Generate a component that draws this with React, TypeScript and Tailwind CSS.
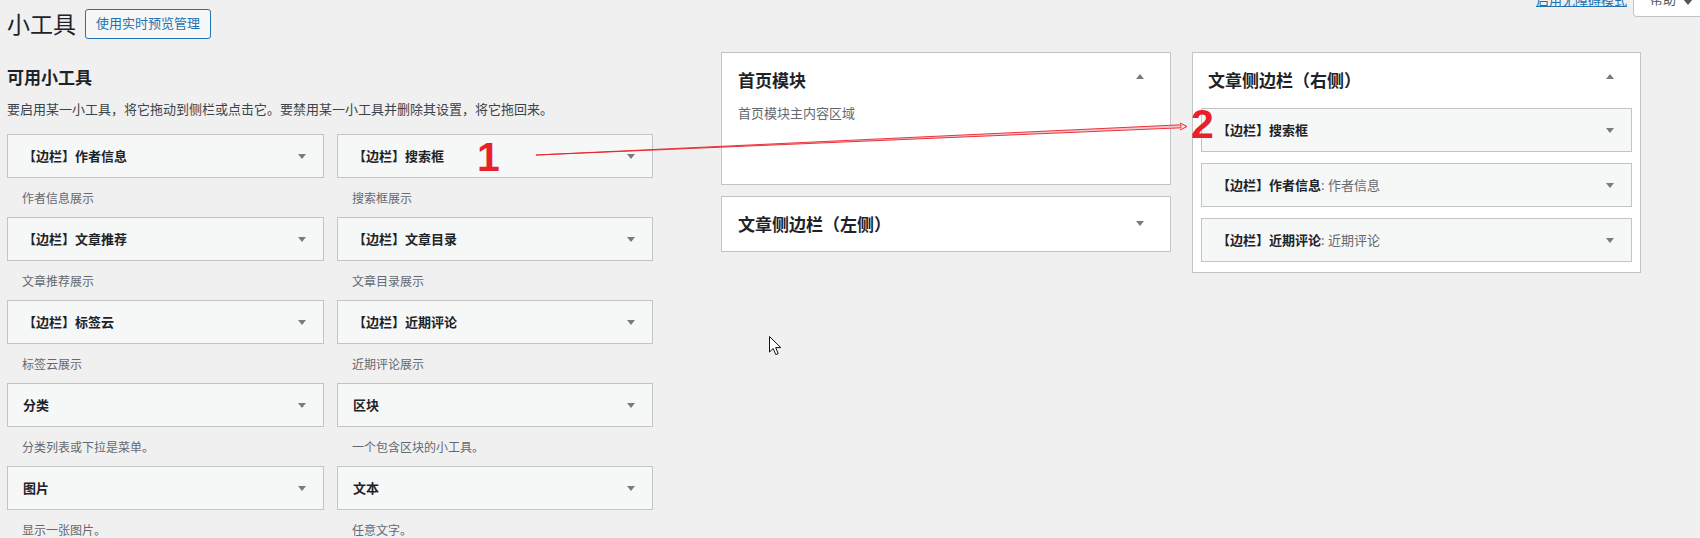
import React from "react";

const available: { title: string; desc: string }[] = [
  { title: "【边栏】作者信息", desc: "作者信息展示" },
  { title: "【边栏】搜索框", desc: "搜索框展示" },
  { title: "【边栏】文章推荐", desc: "文章推荐展示" },
  { title: "【边栏】文章目录", desc: "文章目录展示" },
  { title: "【边栏】标签云", desc: "标签云展示" },
  { title: "【边栏】近期评论", desc: "近期评论展示" },
  { title: "分类", desc: "分类列表或下拉是菜单。" },
  { title: "区块", desc: "一个包含区块的小工具。" },
  { title: "图片", desc: "显示一张图片。" },
  { title: "文本", desc: "任意文字。" },
];

function Down() {
  return (
    <svg width="8" height="5" viewBox="0 0 8 5" className="block shrink-0">
      <polygon points="0,0 8,0 4,5" fill="#787c82" />
    </svg>
  );
}

function Up() {
  return (
    <svg width="8" height="5" viewBox="0 0 8 5" className="block shrink-0">
      <polygon points="0,5 8,5 4,0" fill="#787c82" />
    </svg>
  );
}

function WidgetBar({ title, sub }: { title: string; sub?: string }) {
  return (
    <div className="flex h-[44px] items-center justify-between border border-[#c3c4c7] bg-[#f6f7f7] pl-[15px] pr-[17px]">
      <span className="text-[13px] leading-[20px] text-[#1d2327]">
        <span className="font-semibold">{title}</span>
        {sub ? <span className="font-normal text-[#646970]">: {sub}</span> : null}
      </span>
      <Down />
    </div>
  );
}

export default function App() {
  return (
    <div className="relative h-[538px] w-[1700px] overflow-hidden bg-[#f0f0f1] text-[#3c434a] [font-family:'Noto_Sans','Noto_Sans_CJK_SC',sans-serif]">
      {/* screen meta links (top right, partially cut off) */}
      <div className="absolute right-0 top-0 flex items-start">
        <a className="relative top-[-8px] mr-[6px] text-[13px] leading-[16px] text-[#2271b1] underline">
          启用无障碍模式
        </a>
        <div className="relative top-[-10px] flex h-[27px] w-[67px] items-end gap-[7px] rounded-bl-[4px] border-b border-l border-[#c3c4c7] bg-white pb-[9px] pl-[16px]">
          <span className="text-[13px] leading-[16px] text-[#50575e]">帮助</span>
          <svg width="10" height="6" viewBox="0 0 10 6" className="mb-[2px] block">
            <polygon points="0,0 10,0 5,6" fill="#50575e" />
          </svg>
        </div>
      </div>

      <div className="px-[7px]">
        {/* title row */}
        <div className="flex items-center pt-[8px]">
          <h1 className="pt-[1px] text-[23px] font-normal leading-[30px] text-[#1d2327]">小工具</h1>
          <a className="ml-[9px] flex h-[30px] items-center rounded-[3px] border border-[#2271b1] bg-[#f6f7f7] px-[10px] text-[13px] text-[#2271b1]">
            使用实时预览管理
          </a>
        </div>

        <div className="mt-[13px] flex items-start">
          {/* available widgets */}
          <div className="w-[646px] pt-[13px]">
            <h2 className="text-[17px] font-bold leading-[26px] text-[#1d2327]">可用小工具</h2>
            <p className="mt-[8px] text-[13px] leading-[20px] text-[#3c434a]">
              要启用某一小工具，将它拖动到侧栏或点击它。要禁用某一小工具并删除其设置，将它拖回来。
            </p>
            <div className="mt-[15px] grid grid-cols-[317px_316px] gap-x-[13px]">
              {available.map((w) => (
                <div key={w.title}>
                  <WidgetBar title={w.title} />
                  <div className="h-[39px] pl-[15px] pt-[13px] text-[12px] leading-[16px] text-[#646970]">
                    {w.desc}
                  </div>
                </div>
              ))}
            </div>
          </div>

          {/* middle column */}
          <div className="ml-[68px] flex w-[450px] flex-col gap-[11px]">
            <div className="h-[133px] border border-[#c3c4c7] bg-white">
              <div className="flex items-start justify-between pl-[16px] pr-[26px] pt-[15px]">
                <h2 className="text-[17px] font-bold leading-[26px] text-[#1d2327]">首页模块</h2>
                <div className="mt-[6px]">
                  <Up />
                </div>
              </div>
              <p className="mt-[9px] pl-[16px] text-[13px] leading-[20px] text-[#646970]">首页模块主内容区域</p>
            </div>
            <div className="h-[56px] border border-[#c3c4c7] bg-white">
              <div className="flex items-start justify-between pl-[16px] pr-[26px] pt-[15px]">
                <h2 className="text-[17px] font-bold leading-[26px] text-[#1d2327]">文章侧边栏（左侧）</h2>
                <div className="mt-[9px]">
                  <Down />
                </div>
              </div>
            </div>
          </div>

          {/* right column */}
          <div className="ml-[21px] w-[449px] border border-[#c3c4c7] bg-white pb-[10px]">
            <div className="flex items-start justify-between pl-[15px] pr-[26px] pt-[15px]">
              <h2 className="text-[17px] font-bold leading-[26px] text-[#1d2327]">文章侧边栏（右侧）</h2>
              <div className="mt-[6px]">
                <Up />
              </div>
            </div>
            <div className="mt-[14px] flex flex-col gap-[11px] px-[8px]">
              <WidgetBar title="【边栏】搜索框" />
              <WidgetBar title="【边栏】作者信息" sub="作者信息" />
              <WidgetBar title="【边栏】近期评论" sub="近期评论" />
            </div>
          </div>
        </div>
      </div>

      {/* annotation overlay */}
      <svg className="pointer-events-none absolute left-0 top-0" width="1700" height="538" viewBox="0 0 1700 538">
        <polygon points="536,155 1181,124.8 1181,127.8" fill="#f9c5c8" stroke="#e8202a" strokeWidth="0.9" strokeLinejoin="round" />
        <polyline points="1180,123 1187,126.5 1180,130" fill="none" stroke="#e8202a" strokeWidth="1" />
      </svg>
      <span className="absolute left-[477px] top-[137px] text-[41px] font-bold leading-[40px] text-[#e8202a] [font-family:'Liberation_Sans',sans-serif]">
        1
      </span>
      <span className="absolute left-[1191px] top-[104px] text-[41px] font-bold leading-[40px] text-[#e8202a] [font-family:'Liberation_Sans',sans-serif]">
        2
      </span>

      {/* mouse cursor */}
      <svg className="pointer-events-none absolute left-[769px] top-[336px]" width="13" height="20" viewBox="0 0 13 20">
        <path d="M0.5,0.5 L0.5,16 L4.2,12.5 L6.8,18.6 L9.2,17.6 L6.7,11.6 L11.8,11.6 Z" fill="white" stroke="#111" strokeWidth="1" strokeLinejoin="round" />
      </svg>
    </div>
  );
}
